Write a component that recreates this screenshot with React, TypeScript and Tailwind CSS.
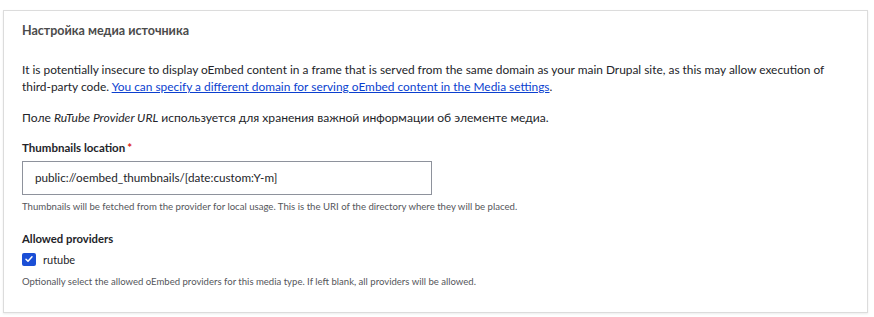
import React from 'react';

const font = { fontFamily: 'Lato, "Open Sans", sans-serif' };

export default function App() {
    return (
        <div className="w-[874px] h-[317px] bg-white pt-[10px] pl-[3px] pr-[6px]" style={font}>
            <div className="border border-[#dcdcdc] shadow-[0_1px_2px_rgba(0,0,0,0.08)] bg-white h-[303px] px-[18px] pt-[10px]">
                {/* Title */}
                <h2 className="text-[12.5px] font-bold text-[#4b4b4b] leading-[20px]">Настройка медиа источника</h2>

                {/* Security warning */}
                <p className="mt-[20px] text-[11.9px] leading-[17px] text-[#232429]">
                    It is potentially insecure to display oEmbed content in a frame that is served from the same domain as your main Drupal site, as this may allow execution of third-party code.{' '}
                    <a href="#" className="text-[#0b3fcf] underline">You can specify a different domain for serving oEmbed content in the Media settings</a>.
                </p>

                <p className="mt-[14px] text-[12.1px] leading-[17px] text-[#232429]">
                    Поле <em>RuTube Provider URL</em> используется для хранения важной информации об элементе медиа.
                </p>

                {/* Thumbnails location */}
                <div className="mt-[14px]">
                    <label className="flex items-center text-[11.5px] font-bold text-[#232429] leading-[16px]">
                        Thumbnails location
                        <span className="text-[#dc2323] ml-[2px]">*</span>
                    </label>
                    <div className="mt-[5px] w-[410px] h-[34px] border border-[#8e929c] flex items-center px-[12px] text-[11.7px] text-[#232429]">
                        public://oembed_thumbnails/[date:custom:Y-m]
                    </div>
                    <p className="mt-[5px] text-[9.6px] leading-[14px] text-[#55565b]">
                        Thumbnails will be fetched from the provider for local usage. This is the URI of the directory where they will be placed.
                    </p>
                </div>

                {/* Allowed providers */}
                <div className="mt-[17px]">
                    <div className="text-[11.3px] font-bold text-[#232429] leading-[16px]">Allowed providers</div>
                    <label className="mt-[4px] flex items-center gap-[7px]">
                        <span className="w-[14px] h-[13px] rounded-[2px] bg-[#1b4fd6] flex items-center justify-center">
                            <svg width="10" height="10" viewBox="0 0 10 10" fill="none">
                                <path d="M2 5.2l2 2 4-4.4" stroke="white" strokeWidth="1.5" strokeLinecap="round" strokeLinejoin="round" />
                            </svg>
                        </span>
                        <span className="text-[11px] text-[#232429] leading-[16px] translate-y-[1px]">rutube</span>
                    </label>
                    <p className="mt-[8px] text-[9.55px] leading-[14px] text-[#55565b]">
                        Optionally select the allowed oEmbed providers for this media type. If left blank, all providers will be allowed.
                    </p>
                </div>
            </div>
        </div>
    );
}
